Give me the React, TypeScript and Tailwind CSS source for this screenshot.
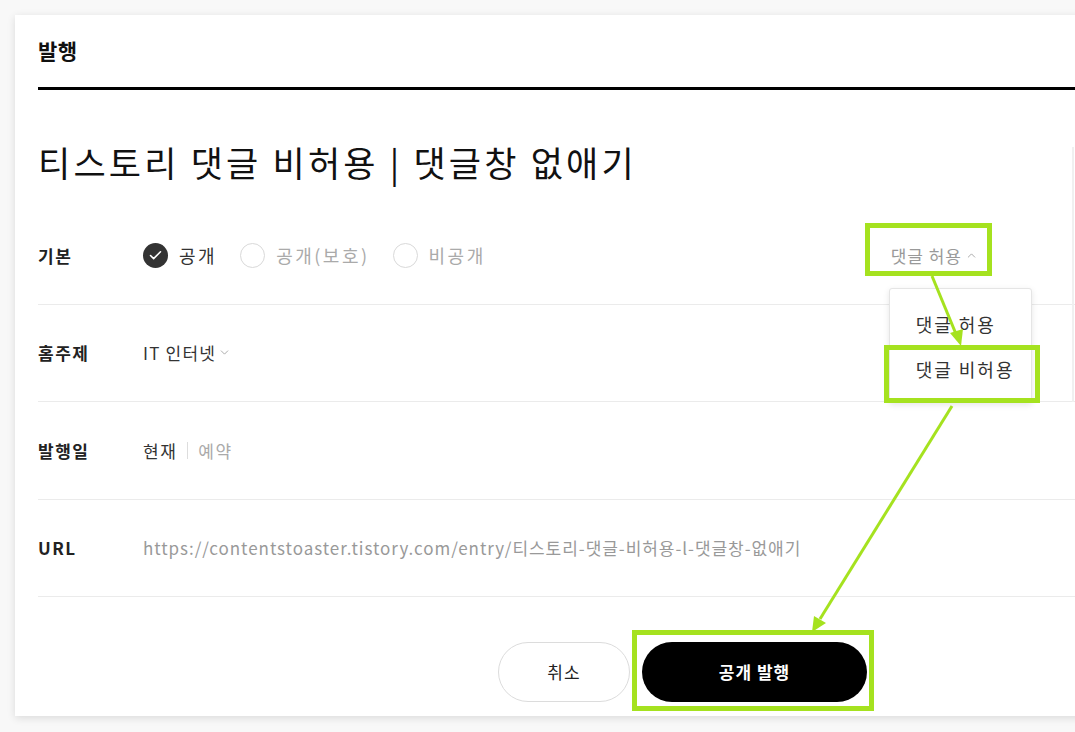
import { ChevronDown, ChevronUp, Check } from "lucide-react";

const font = { fontFamily: '"Noto Sans CJK KR", "Noto Sans", sans-serif' };

function Radio({ label, checked }: { label: string; checked?: boolean }) {
  return (
    <label className="flex items-center gap-[11px]">
      {checked ? (
        <span className="flex h-[25px] w-[25px] items-center justify-center rounded-full bg-[#333]">
          <Check className="h-[15px] w-[15px] text-white" strokeWidth={2.5} />
        </span>
      ) : (
        <span className="h-[25px] w-[25px] rounded-full border-[1.5px] border-[#d9d9d9]" />
      )}
      <span className={checked ? "text-[#333]" : "text-[#aaa]"}>{label}</span>
    </label>
  );
}

function Row({ label, children }: { label: string; children: React.ReactNode }) {
  return (
    <div className="flex h-[97.5px] items-center border-b border-[#ebebeb]">
      <div className="w-[105px] text-[17px] font-bold tracking-[1.5px] text-[#222]">{label}</div>
      {children}
    </div>
  );
}

export default function App() {
  return (
    <div className="relative h-[732px] w-full overflow-hidden bg-[#f8f8f8] pl-[15px] pt-[15px]" style={font}>
      <div className="relative h-[701px] w-[1100px] bg-white pl-[23px] shadow-[0_2px_8px_rgba(0,0,0,0.12)]">
        <div className="flex h-[72px] items-center text-[21px] font-bold tracking-[0.5px] text-[#111]">발행</div>
        <div className="h-[3px] bg-black" />

        <div className="pb-[23px] pt-[50px] text-[35px] leading-[44px] tracking-[3.2px] text-[#111]">
          티스토리 댓글 비허용 | 댓글창 없애기
        </div>

        <Row label="기본">
          <div className="flex items-center gap-[23px] text-[18px] tracking-[2.5px]">
            <Radio label="공개" checked />
            <Radio label="공개(보호)" />
            <Radio label="비공개" />
          </div>
          <div className="relative ml-auto mr-[137px] flex items-center gap-[3px] text-[17px] tracking-[1px] text-[#999]">
            댓글 허용
            <ChevronUp className="h-[13px] w-[13px]" strokeWidth={1.5} />
            <div className="absolute left-[-2px] top-[45px] z-10 w-[143px] rounded-[3px] border border-[#e5e5e5] bg-white pb-[10px] pt-[13px] text-[18px] tracking-[2px] text-[#333] shadow-[0_2px_6px_rgba(0,0,0,0.1)]">
              <div className="flex h-[45px] items-center whitespace-nowrap pl-[26px]">댓글 허용</div>
              <div className="flex h-[45px] items-center whitespace-nowrap pl-[26px]">댓글 비허용</div>
            </div>
          </div>
        </Row>

        <Row label="홈주제">
          <div className="flex items-center gap-[2px] text-[17px] tracking-[1.2px] text-[#333]">
            IT 인터넷
            <ChevronDown className="h-[13px] w-[13px] text-[#999]" strokeWidth={1.5} />
          </div>
        </Row>

        <Row label="발행일">
          <div className="flex items-center text-[17px] tracking-[1.5px]">
            <span className="text-[#333]">현재</span>
            <span className="mx-[10px] h-[17px] w-px bg-[#ddd]" />
            <span className="text-[#aaa]">예약</span>
          </div>
        </Row>

        <Row label="URL">
          <div className="whitespace-nowrap text-[17px] tracking-[0.95px] text-[#999]">
            https://contentstoaster.tistory.com/entry/티스토리-댓글-비허용-l-댓글창-없애기
          </div>
        </Row>

        <div className="ml-[460px] mt-[45px] flex gap-[12px]">
          <button className="h-[60px] w-[132px] rounded-full border border-[#dcdcdc] bg-white text-[17px] tracking-[1px] text-[#222]">
            취소
          </button>
          <button className="h-[60px] w-[225px] rounded-full bg-black text-[17px] font-bold tracking-[1px] text-white">
            공개 발행
          </button>
        </div>

        <div className="absolute left-[1057px] top-[132px] h-[255px] w-[2px] bg-[#f0f0f0]" />
      </div>

      {/* annotation overlay */}
      <div className="pointer-events-none absolute left-[865px] top-[223px] z-20 h-[53px] w-[127px] border-[5px] border-[#a5e21f]" />
      <div className="pointer-events-none absolute left-[884px] top-[345px] z-20 h-[58px] w-[156px] border-[5px] border-[#a5e21f]" />
      <div className="pointer-events-none absolute left-[632px] top-[630px] z-20 h-[81px] w-[242px] border-[5px] border-[#a5e21f]" />
      <svg className="pointer-events-none absolute left-0 top-0 z-20" width="1075" height="732">
        <line x1="932" y1="276" x2="956" y2="334" stroke="#a5e21f" strokeWidth="3" />
        <polygon points="961,346 950,333 963,329" fill="#a5e21f" />
        <line x1="952" y1="406" x2="820" y2="619" stroke="#a5e21f" strokeWidth="3" />
        <polygon points="812,632 814,616 826,623" fill="#a5e21f" />
      </svg>
    </div>
  );
}
